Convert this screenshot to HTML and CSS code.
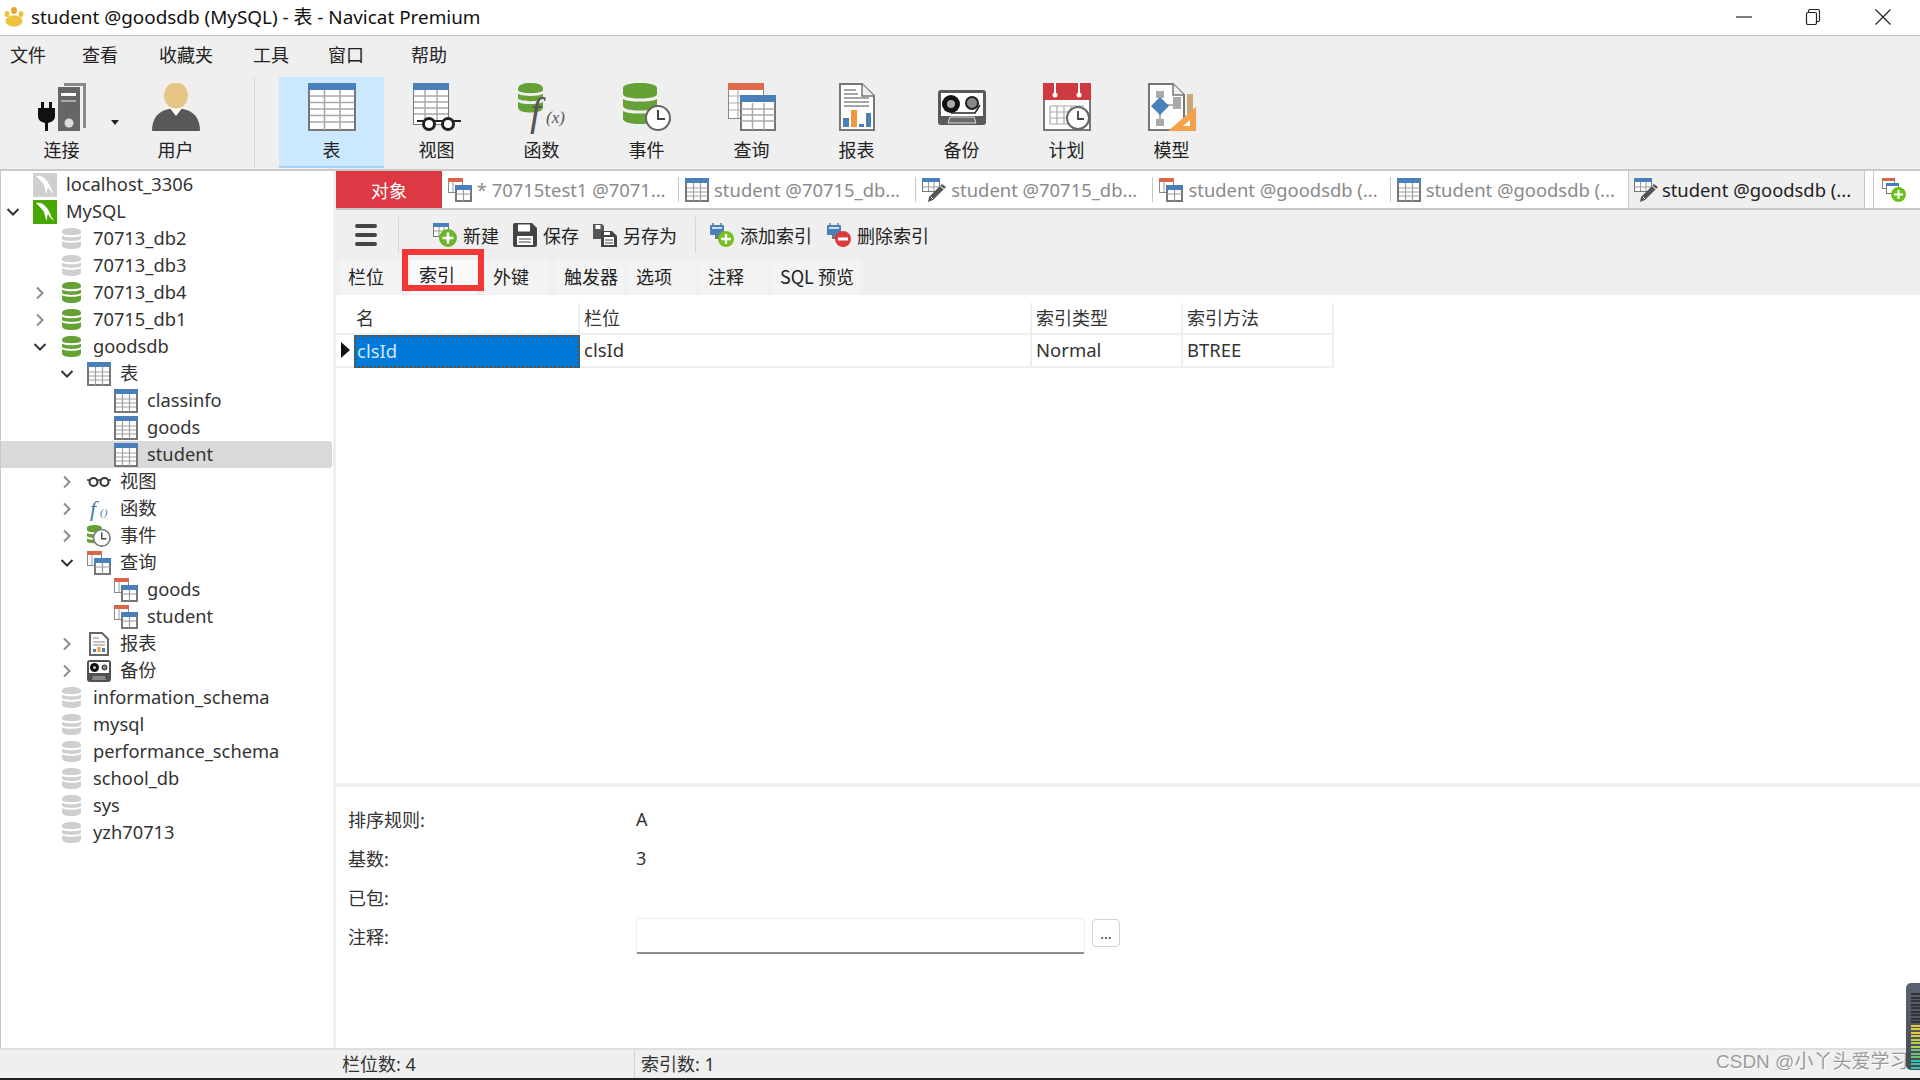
FILE: index.html
```html
<!DOCTYPE html>
<html lang="zh">
<head>
<meta charset="utf-8">
<title>student @goodsdb (MySQL) - 表 - Navicat Premium</title>
<link rel="stylesheet" href="styles.css">
</head>
<body>
<svg class="defs" width="0" height="0" aria-hidden="true">
  <symbol id="i-table" viewBox="0 0 48 48">
    <rect x="1" y="1" width="46" height="46" fill="#fff" stroke="#777" stroke-width="2"/>
    <path d="M2 13h44M2 19.500h44M2 26h44M2 32.500h44M2 39h44M16.500 7v40M32 7v40" stroke="#a8a8a8" stroke-width="1.600" fill="none"/>
    <rect width="48" height="7" fill="#4a80b9"/>
  </symbol>
  <symbol id="i-stable" viewBox="0 0 24 24">
    <rect x="1" y="1" width="22" height="22" fill="#fff" stroke="#777" stroke-width="2"/>
    <path d="M2 10h20M2 14h20M2 18h20M8.500 5v18M15.500 5v18" stroke="#a0a0a0" stroke-width="1.200" fill="none"/>
    <rect width="24" height="5" fill="#4a80b9"/>
  </symbol>
  <symbol id="i-view" viewBox="0 0 48 48">
    <rect x=".5" y=".5" width="35" height="41" fill="#fff" stroke="#777"/>
    <path d="M1 13h34M1 19h34M1 25h34M1 31h34M12 7v30M24 7v30" stroke="#a8a8a8" stroke-width="1.400"/>
    <rect width="36" height="7" fill="#4a80b9"/>
    <path d="M4 38h44" stroke="#222" stroke-width="2"/>
    <circle cx="16" cy="41" r="5.500" fill="#fff" stroke="#222" stroke-width="3"/>
    <circle cx="35" cy="41" r="5.500" fill="#fff" stroke="#222" stroke-width="3"/>
  </symbol>
  <symbol id="i-db" viewBox="0 0 20 22">
    <path d="M0 4c0-2.500 4-4 10-4s10 1.500 10 4v1c0 1.500-4 2.500-10 2.500S0 6.500 0 5z" fill="currentColor"/>
    <path d="M0 8c3 1.500 6 1.600 10 1.600S17 9.500 20 8v3c0 1.500-4 2.500-10 2.500S0 12.500 0 11z" fill="currentColor"/>
    <path d="M0 14c3 1.500 6 1.600 10 1.600s7-.1 10-1.600v4c0 2.500-4 4-10 4S0 20.500 0 18z" fill="currentColor"/>
  </symbol>
  <symbol id="i-event" viewBox="0 0 48 48">
    <path d="M0 5c0-3.300 8-5 17-5s17 1.700 17 5v6c0 3-8 4.500-17 4.500S0 14 0 11zM0 16c4 2 9 2.500 17 2.500s13-.5 17-2.500v7c0 3-8 4.500-17 4.500S0 26 0 23zM0 28c4 2 9 2.500 17 2.500s13-.5 17-2.500v8c0 3-8 5-17 5S0 39 0 36z" fill="#66a136"/>
    <circle cx="35" cy="35" r="12" fill="#fff" stroke="#666" stroke-width="2"/>
    <path d="M35 27v9h7" fill="none" stroke="#444" stroke-width="2"/>
  </symbol>
  <symbol id="i-query" viewBox="0 0 48 48">
    <rect x=".5" y=".5" width="35" height="35" fill="#fff" stroke="#888"/>
    <path d="M1 13h34M1 20h34M1 27h34M10 6v29" stroke="#b0b0b0" stroke-width="1.200"/>
    <rect width="36" height="7" fill="#dd6a4a"/>
    <rect x="13" y="13" width="34" height="34" fill="#fff" stroke="#777" stroke-width="2"/>
    <path d="M13 26h34M13 32h34M13 38h34M24.500 20v27M36 20v27" stroke="#a8a8a8" stroke-width="1.400"/>
    <rect x="12" y="12" width="36" height="7" fill="#4a80b9"/>
  </symbol>
  <symbol id="i-squery" viewBox="0 0 24 24">
    <rect x=".5" y=".5" width="14" height="14" fill="#fff" stroke="#888"/>
    <rect width="15" height="4" fill="#d9654a"/>
    <path d="M5 4v10" stroke="#999"/>
    <rect x="8" y="8" width="15" height="15" fill="#fff" stroke="#777" stroke-width="2"/>
    <path d="M8 16h15M15.500 12v11" stroke="#999" stroke-width="1.200"/>
    <rect x="7" y="7" width="17" height="5" fill="#4a80b9"/>
  </symbol>
  <symbol id="i-report" viewBox="0 0 48 48">
    <path d="M7 1h22l12 12v34H7z" fill="#fff" stroke="#777" stroke-width="2"/>
    <path d="M29 1v12h12" fill="#eee" stroke="#777" stroke-width="1.500"/>
    <path d="M11 7h12M11 11h14M11 15h25M11 19h25M11 23h25" stroke="#888" stroke-width="1.300"/>
    <rect x="10" y="35" width="6" height="9" fill="#4a80b9"/>
    <rect x="18" y="27" width="6" height="17" fill="#f0983a"/>
    <rect x="26" y="41" width="5" height="3" fill="#4a80b9"/>
    <rect x="33" y="30" width="5" height="14" fill="#4a80b9"/>
  </symbol>
  <symbol id="i-backup" viewBox="0 0 48 48">
    <rect y="7" width="48" height="35" rx="3" fill="#5a5a5a"/>
    <rect x="3" y="10" width="42" height="23" fill="#fff"/>
    <circle cx="13" cy="21" r="9" fill="#111"/>
    <circle cx="13" cy="21" r="4" fill="#aaa"/>
    <circle cx="34" cy="20" r="6" fill="#888" stroke="#222" stroke-width="2"/>
    <path d="M13 30h24l5-8" fill="none" stroke="#222" stroke-width="1.500"/>
    <path d="M10 40l2-6h24l2 6z" fill="#6a6a6a" stroke="#ddd"/>
  </symbol>
  <symbol id="i-sched" viewBox="0 0 48 48">
    <rect x="1" y="1" width="46" height="46" fill="#fff" stroke="#777" stroke-width="2"/>
    <rect width="48" height="17" fill="#cf3a40"/>
    <path d="M12 0v11M36 0v11" stroke="#fff" stroke-width="2"/>
    <circle cx="12" cy="12" r="2.500" fill="#fff"/><circle cx="36" cy="12" r="2.500" fill="#fff"/>
    <path d="M7 23h34M7 29h34M7 35h34M7 41h34M7 23v18M14 23v18M21 23v18M28 23v18M35 23v18" stroke="#aaa" stroke-width="1.200" fill="none"/>
    <circle cx="35" cy="35" r="11" fill="#fff" stroke="#666" stroke-width="2"/>
    <path d="M35 28v8h6" fill="none" stroke="#444" stroke-width="1.800"/>
  </symbol>
  <symbol id="i-model" viewBox="0 0 48 48">
    <path d="M1 1h24l11 11v35H1z" fill="#fff" stroke="#777" stroke-width="2"/>
    <path d="M25 1v11h11" fill="#eee" stroke="#777" stroke-width="1.500"/>
    <path d="M12 13v24M12 22h20v-8" fill="none" stroke="#999" stroke-width="1.500"/>
    <rect x="8" y="8" width="8" height="7" fill="#aaa"/>
    <rect x="8" y="36" width="8" height="7" fill="#aaa"/>
    <rect x="25" y="14" width="8" height="12" fill="#aaa"/>
    <path d="M12 14l9 9-9 9-9-9z" fill="#4a80b9"/>
    <rect x="39" y="11" width="6" height="20" fill="#c9a878"/>
    <path d="M48 24v24H20z" fill="#f5a04a"/>
    <path d="M42 37v6h-7z" fill="#fff"/>
  </symbol>
  <symbol id="i-conn" viewBox="0 0 48 48">
    <path d="M26 0h22v45h-3V3H26z" fill="#8a8a8a"/>
    <rect x="20" y="4" width="22" height="44" fill="#666"/>
    <rect x="23" y="10" width="15" height="3" fill="#fff"/>
    <rect x="23" y="17" width="15" height="2" fill="#aaa"/>
    <circle cx="31" cy="40" r="4.500" fill="#ddd"/>
    <path d="M0 25h3v-6h3v6h5v-6h3v6h3v8c0 4-3 6-7 7v8H7v-8c-4-1-7-3-7-7z" fill="#111"/>
  </symbol>
  <symbol id="i-user" viewBox="0 0 48 48">
    <path d="M0 48c0-14 7-20 17-22h14c10 2 17 8 17 22z" fill="#585858"/>
    <path d="M17 24l7 9 7-9z" fill="#fff"/>
    <ellipse cx="24" cy="12.500" rx="12" ry="13" fill="#e6c483"/>
  </symbol>
  <symbol id="i-mysql" viewBox="0 0 24 24">
    <rect width="24" height="24" fill="currentColor"/>
    <path d="M3 3c4-1 8 1 10 4 3 3 4 6 5 9l3 5c-3-2-5-5-6-7-1 2-1 4-1 7-2-3-2-6-3-9C9 9 6 6 3 3z" fill="#fff"/>
  </symbol>
  <symbol id="i-glasses" viewBox="0 0 24 12">
    <path d="M0 4h24" stroke="#333" stroke-width="1.500"/>
    <circle cx="6.500" cy="6" r="4" fill="#fff" stroke="#333" stroke-width="2"/>
    <circle cx="17.500" cy="6" r="4" fill="#fff" stroke="#333" stroke-width="2"/>
  </symbol>
  <symbol id="i-sevent" viewBox="0 0 26 24">
    <path d="M0 3c0-2 4-3 8-3s8 1 8 3v3c0 1-4 2-8 2S0 7 0 6zM0 9c3 1 5 1 8 1s5 0 8-1v3c0 1-4 2-8 2s-8-1-8-2zM0 15c3 1 5 1 8 1v4c-4 0-8-1-8-2z" fill="#66a136"/>
    <circle cx="16" cy="14" r="9" fill="#fff" stroke="#777" stroke-width="1.800"/>
    <path d="M16 8v7h5" fill="none" stroke="#444" stroke-width="1.500"/>
  </symbol>
  <symbol id="i-sreport" viewBox="0 0 24 24">
    <path d="M3 1h12l6 6v16H3z" fill="#fff" stroke="#666" stroke-width="2"/>
    <path d="M6 6h6M6 10h12M6 13h12" stroke="#888"/>
    <rect x="6" y="17" width="3" height="3" fill="#4a80b9"/>
    <rect x="10.500" y="15" width="3" height="5" fill="#f0983a"/>
    <rect x="15" y="16" width="3" height="4" fill="#4a80b9"/>
  </symbol>
  <symbol id="i-sbackup" viewBox="0 0 24 24">
    <rect width="24" height="22" y="1" rx="3" fill="#505050"/>
    <rect x="2" y="3" width="20" height="11" fill="#fff"/>
    <circle cx="7.500" cy="8.500" r="4.500" fill="#111"/>
    <circle cx="7.500" cy="8.500" r="1.500" fill="#ccc"/>
    <circle cx="17.500" cy="8.500" r="2.500" fill="#888" stroke="#222"/>
    <path d="M5 21l1-4h12l1 4z" fill="#888"/>
  </symbol>
  <symbol id="i-design" viewBox="0 0 24 24">
    <rect x=".5" y=".5" width="17" height="13" fill="#fff" stroke="#777"/>
    <path d="M1 9h16M6.500 4v9M12 4v9" stroke="#999"/>
    <rect width="18" height="4" fill="#4a80b9"/>
    <path d="M20 6l4 3-13 13-5 2 1-5z" fill="#555"/>
    <path d="M18 8l4 3M9 19l2 2" stroke="#fff" fill="none"/>
  </symbol>
  <symbol id="i-newtab" viewBox="0 0 24 24">
    <rect x=".5" y=".5" width="12" height="10" fill="#fff" stroke="#888"/>
    <rect width="13" height="3" fill="#d9654a"/>
    <rect x="4.500" y="5.500" width="12" height="10" fill="#fff" stroke="#777"/>
    <rect x="4" y="5" width="13" height="3" fill="#4a80b9"/>
    <circle cx="16.500" cy="16.500" r="7.500" fill="#6cc11d"/>
    <path d="M16.500 12v9M12 16.500h9" stroke="#fff" stroke-width="2"/>
  </symbol>
  <symbol id="i-new" viewBox="0 0 24 24">
    <rect x=".5" y=".5" width="15" height="13" fill="#fff" stroke="#777"/>
    <path d="M1 8h14M6 4v9M11 4v9" stroke="#999"/>
    <rect width="16" height="4" fill="#4a80b9"/>
    <circle cx="15" cy="15" r="9" fill="#6cb52a"/>
    <path d="M15 9.500v11M9.500 15h11" stroke="#fff" stroke-width="2.600"/>
  </symbol>
  <symbol id="i-save" viewBox="0 0 24 24">
    <path d="M0 2a2 2 0 0 1 2-2h17l5 5v17a2 2 0 0 1-2 2H2a2 2 0 0 1-2-2z" fill="#444"/>
    <rect x="5" y="1.500" width="12" height="7" fill="#fff"/>
    <rect x="4" y="13" width="16" height="9" fill="#fff"/>
    <path d="M6 16h12M6 19h12" stroke="#444" stroke-width="1.200"/>
  </symbol>
  <symbol id="i-saveas" viewBox="0 0 24 24">
    <path d="M0 1h9l2 2v13H0z" fill="#555"/>
    <rect x="2.500" y="2" width="5" height="4" fill="#fff"/>
    <path d="M8 8h11l5 5v11H8z" fill="#444"/>
    <rect x="11" y="14" width="10" height="8" fill="#fff"/>
    <path d="M12 17h8M12 20h8" stroke="#444"/>
    <rect x="11" y="9" width="6" height="3" fill="#fff"/>
  </symbol>
  <symbol id="i-idx" viewBox="0 0 24 24">
    <path d="M3 3V0M11 3V0" stroke="#4a80b9" stroke-width="1.500"/>
    <rect y="2" width="14" height="10" rx="1" fill="#4a80b9"/>
    <rect x="2" y="4" width="10" height="2" fill="#cfe0f0"/>
    <path d="M5 12v4h4v-4z" fill="#777"/>
  </symbol>
  <symbol id="i-addi" viewBox="0 0 24 24">
    <use href="#i-idx" width="24" height="24"/>
    <circle cx="16" cy="16" r="8" fill="#76c11f"/>
    <path d="M16 11v10M11 16h10" stroke="#fff" stroke-width="2.400"/>
  </symbol>
  <symbol id="i-deli" viewBox="0 0 24 24">
    <use href="#i-idx" width="24" height="24"/>
    <circle cx="16" cy="16" r="8" fill="#dd3a3a"/>
    <path d="M11 16h10" stroke="#fff" stroke-width="3"/>
  </symbol>
  <symbol id="i-chev-d" viewBox="0 0 14 10"><path d="M1.500 2l5.500 5.500L12.500 2" fill="none" stroke="currentColor" stroke-width="2"/></symbol>
  <symbol id="i-chev-r" viewBox="0 0 10 14"><path d="M2 1.500L7.500 7 2 12.500" fill="none" stroke="currentColor" stroke-width="2"/></symbol>
</svg>

<div class="app">
  <header class="titlebar">
    <svg class="app-logo" viewBox="0 0 20 20"><ellipse cx="10" cy="14" rx="8.500" ry="5.800" fill="#ecc23e"/><ellipse cx="3" cy="7" rx="2.500" ry="3" fill="#ecc23e"/><ellipse cx="10" cy="3.500" rx="3" ry="3.500" fill="#e8a23a"/><ellipse cx="17" cy="7" rx="2.500" ry="3" fill="#ecc23e"/></svg>
    <span class="title-text">student @goodsdb (MySQL) - 表 - Navicat Premium</span>
    <div class="win-btns">
      <svg viewBox="0 0 16 16"><path d="M0 8h16" stroke="#222" stroke-width="1.200"/></svg>
      <svg viewBox="0 0 16 16"><path d="M3.500 3.500V2a1.500 1.500 0 0 1 1.500-1.500h8A1.500 1.500 0 0 1 14.500 2v9a1.500 1.500 0 0 1-1.500 1.500h-1.500" fill="none" stroke="#222" stroke-width="1.100"/><rect x="1.500" y="3.500" width="10" height="12" rx="1.500" fill="#fff" stroke="#222" stroke-width="1.200"/></svg>
      <svg viewBox="0 0 16 16"><path d="M.5.500l15 15M15.500.500l-15 15" stroke="#222" stroke-width="1.200"/></svg>
    </div>
  </header>

  <nav class="menubar">
    <span class="m-wen">文件</span><span class="m-cha">查看</span><span class="m-shou">收藏夹</span><span class="m-gong">工具</span><span class="m-chuang">窗口</span><span class="m-bang">帮助</span>
  </nav>

  <div class="toolbar">
    <div class="tb-btn tb-conn"><svg class="tb-ico"><use href="#i-conn"/></svg><span>连接</span><i class="caret"></i></div>
    <div class="tb-btn tb-user"><svg class="tb-ico"><use href="#i-user"/></svg><span>用户</span></div>
    <div class="tb-sep"></div>
    <div class="tb-btn active"><svg class="tb-ico"><use href="#i-table"/></svg><span>表</span></div>
    <div class="tb-btn"><svg class="tb-ico"><use href="#i-view"/></svg><span>视图</span></div>
    <div class="tb-btn"><svg class="tb-ico" viewBox="0 0 48 48"><g class="c-green" transform="scale(1.250 1.350)"><use href="#i-db" width="20" height="22"/></g><text x="12" y="42" class="fx-big">f</text><text x="28" y="40" class="fx-small">(x)</text></svg><span>函数</span></div>
    <div class="tb-btn"><svg class="tb-ico"><use href="#i-event"/></svg><span>事件</span></div>
    <div class="tb-btn"><svg class="tb-ico"><use href="#i-query"/></svg><span>查询</span></div>
    <div class="tb-btn"><svg class="tb-ico"><use href="#i-report"/></svg><span>报表</span></div>
    <div class="tb-btn"><svg class="tb-ico"><use href="#i-backup"/></svg><span>备份</span></div>
    <div class="tb-btn"><svg class="tb-ico"><use href="#i-sched"/></svg><span>计划</span></div>
    <div class="tb-btn"><svg class="tb-ico"><use href="#i-model"/></svg><span>模型</span></div>
  </div>

  <div class="workspace">
    <aside class="tree">
      <div class="row l0"><span class="chev"></span><span class="ico"><svg class="s24 c-gray"><use href="#i-mysql"/></svg></span><span class="lbl">localhost_3306</span></div>
      <div class="row l0"><span class="chev open"><svg class="cd"><use href="#i-chev-d"/></svg></span><span class="ico"><svg class="s24 c-mysql"><use href="#i-mysql"/></svg></span><span class="lbl">MySQL</span></div>
      <div class="row l1"><span class="chev"></span><span class="ico"><svg class="sdb c-gray"><use href="#i-db"/></svg></span><span class="lbl">70713_db2</span></div>
      <div class="row l1"><span class="chev"></span><span class="ico"><svg class="sdb c-gray"><use href="#i-db"/></svg></span><span class="lbl">70713_db3</span></div>
      <div class="row l1"><span class="chev"><svg class="cr"><use href="#i-chev-r"/></svg></span><span class="ico"><svg class="sdb c-green"><use href="#i-db"/></svg></span><span class="lbl">70713_db4</span></div>
      <div class="row l1"><span class="chev"><svg class="cr"><use href="#i-chev-r"/></svg></span><span class="ico"><svg class="sdb c-green"><use href="#i-db"/></svg></span><span class="lbl">70715_db1</span></div>
      <div class="row l1"><span class="chev open"><svg class="cd"><use href="#i-chev-d"/></svg></span><span class="ico"><svg class="sdb c-green"><use href="#i-db"/></svg></span><span class="lbl">goodsdb</span></div>
      <div class="row l2"><span class="chev open"><svg class="cd"><use href="#i-chev-d"/></svg></span><span class="ico"><svg class="s24"><use href="#i-stable"/></svg></span><span class="lbl">表</span></div>
      <div class="row l3"><span class="chev"></span><span class="ico"><svg class="s24"><use href="#i-stable"/></svg></span><span class="lbl">classinfo</span></div>
      <div class="row l3"><span class="chev"></span><span class="ico"><svg class="s24"><use href="#i-stable"/></svg></span><span class="lbl">goods</span></div>
      <div class="row l3 selected"><span class="chev"></span><span class="ico"><svg class="s24"><use href="#i-stable"/></svg></span><span class="lbl">student</span></div>
      <div class="row l2"><span class="chev"><svg class="cr"><use href="#i-chev-r"/></svg></span><span class="ico"><svg class="sgl"><use href="#i-glasses"/></svg></span><span class="lbl">视图</span></div>
      <div class="row l2"><span class="chev"><svg class="cr"><use href="#i-chev-r"/></svg></span><span class="ico"><svg class="s24" viewBox="0 0 24 24"><text x="3" y="19" class="sfx-big">f</text><text x="13" y="19" class="sfx-small">()</text></svg></span><span class="lbl">函数</span></div>
      <div class="row l2"><span class="chev"><svg class="cr"><use href="#i-chev-r"/></svg></span><span class="ico"><svg class="s24"><use href="#i-sevent"/></svg></span><span class="lbl">事件</span></div>
      <div class="row l2"><span class="chev open"><svg class="cd"><use href="#i-chev-d"/></svg></span><span class="ico"><svg class="s24"><use href="#i-squery"/></svg></span><span class="lbl">查询</span></div>
      <div class="row l3"><span class="chev"></span><span class="ico"><svg class="s24"><use href="#i-squery"/></svg></span><span class="lbl">goods</span></div>
      <div class="row l3"><span class="chev"></span><span class="ico"><svg class="s24"><use href="#i-squery"/></svg></span><span class="lbl">student</span></div>
      <div class="row l2"><span class="chev"><svg class="cr"><use href="#i-chev-r"/></svg></span><span class="ico"><svg class="s24"><use href="#i-sreport"/></svg></span><span class="lbl">报表</span></div>
      <div class="row l2"><span class="chev"><svg class="cr"><use href="#i-chev-r"/></svg></span><span class="ico"><svg class="s24"><use href="#i-sbackup"/></svg></span><span class="lbl">备份</span></div>
      <div class="row l1"><span class="chev"></span><span class="ico"><svg class="sdb c-gray"><use href="#i-db"/></svg></span><span class="lbl">information_schema</span></div>
      <div class="row l1"><span class="chev"></span><span class="ico"><svg class="sdb c-gray"><use href="#i-db"/></svg></span><span class="lbl">mysql</span></div>
      <div class="row l1"><span class="chev"></span><span class="ico"><svg class="sdb c-gray"><use href="#i-db"/></svg></span><span class="lbl">performance_schema</span></div>
      <div class="row l1"><span class="chev"></span><span class="ico"><svg class="sdb c-gray"><use href="#i-db"/></svg></span><span class="lbl">school_db</span></div>
      <div class="row l1"><span class="chev"></span><span class="ico"><svg class="sdb c-gray"><use href="#i-db"/></svg></span><span class="lbl">sys</span></div>
      <div class="row l1"><span class="chev"></span><span class="ico"><svg class="sdb c-gray"><use href="#i-db"/></svg></span><span class="lbl">yzh70713</span></div>
    </aside>

    <main class="main">
      <div class="doc-tabs">
        <div class="obj-tab">对象</div>
        <div class="doc-tab"><svg class="t-ico"><use href="#i-squery"/></svg><span>* 70715test1 @7071...</span></div>
        <div class="doc-tab"><svg class="t-ico"><use href="#i-stable"/></svg><span>student @70715_db...</span></div>
        <div class="doc-tab"><svg class="t-ico"><use href="#i-design"/></svg><span>student @70715_db...</span></div>
        <div class="doc-tab"><svg class="t-ico"><use href="#i-squery"/></svg><span>student @goodsdb (...</span></div>
        <div class="doc-tab"><svg class="t-ico"><use href="#i-stable"/></svg><span>student @goodsdb (...</span></div>
        <div class="doc-tab current"><svg class="t-ico"><use href="#i-design"/></svg><span>student @goodsdb (...</span></div>
        <div class="new-tab"><svg class="t-ico"><use href="#i-newtab"/></svg></div>
      </div>

      <div class="actions">
        <div class="hamb"><i></i><i></i><i></i></div>
        <div class="a-sep"></div>
        <div class="act a-new"><svg><use href="#i-new"/></svg><span>新建</span></div>
        <div class="act a-save"><svg><use href="#i-save"/></svg><span>保存</span></div>
        <div class="act a-saveas"><svg><use href="#i-saveas"/></svg><span>另存为</span></div>
        <div class="a-sep a-sep2"></div>
        <div class="act a-add"><svg><use href="#i-addi"/></svg><span>添加索引</span></div>
        <div class="act a-del"><svg><use href="#i-deli"/></svg><span>删除索引</span></div>
      </div>

      <div class="subtabs">
        <div class="st st1">栏位</div>
        <div class="st st2 current">索引</div>
        <div class="st st3">外键</div>
        <div class="st st4">触发器</div>
        <div class="st st5">选项</div>
        <div class="st st6">注释</div>
        <div class="st st7">SQL 预览</div>
        <div class="redbox"></div>
      </div>

      <section class="grid-area">
        <div class="grid">
          <div class="gh gi"></div><div class="gh gh-name">名</div><div class="gh">栏位</div><div class="gh">索引类型</div><div class="gh">索引方法</div>
          <div class="gc gi"><i class="row-mark"></i></div><div class="gc sel">clsId</div><div class="gc">clsId</div><div class="gc">Normal</div><div class="gc">BTREE</div>
        </div>
      </section>

      <section class="detail">
        <div class="d-lbl">排序规则:</div><div class="d-val">A</div>
        <div class="d-lbl">基数:</div><div class="d-val">3</div>
        <div class="d-lbl">已包:</div><div class="d-val"></div>
        <div class="d-lbl">注释:</div><div class="d-val d-inp"><div class="input"></div><div class="more">...</div></div>
      </section>
    </main>
  </div>

  <footer class="status">
    <div class="s-left"></div>
    <div class="s-a">栏位数: 4</div>
    <div class="s-b">索引数: 1</div>
  </footer>

  <div class="watermark">CSDN @小丫头爱学习</div>
  <div class="meter">
    <i class="off"></i><i class="off"></i><i class="off"></i><i class="off"></i><i class="off"></i><i class="off"></i><i class="off"></i><i class="off"></i><i class="off"></i>
    <i class="y"></i><i class="y"></i><i class="y"></i><i class="y"></i><i class="yg"></i><i class="yg"></i><i class="yg"></i><i class="g"></i><i class="g"></i><i class="g"></i><i class="t"></i><i class="t"></i><i class="t"></i>
  </div>
</div>
</body>
</html>
```

FILE: styles.css
```css
* { box-sizing: border-box; }
html, body { margin: 0; padding: 0; height: 100%; overflow: hidden; background: #fff; }
body { font-family: "Noto Sans", "Noto Sans CJK SC", sans-serif; font-size: 16px; color: #333; }
.defs { position: absolute; }
.app { position: relative; width: 1920px; height: 1080px; display: flex; flex-direction: column; overflow: hidden; }

.titlebar { height: 36px; flex: none; display: flex; align-items: center; background: #fff; border-bottom: 1px solid #bdbdbd; padding: 0 0 1px 4px; }
.app-logo { width: 20px; height: 20px; margin-right: 7px; }
.title-text { font-size: 18.900px; line-height: 24px; color: #111; white-space: nowrap; }
.win-btns { margin-left: auto; display: flex; padding-right: 29px; }
.win-btns svg { width: 16px; height: 16px; margin-left: 53px; }
.win-btns svg:nth-child(3) { margin-left: 54px; }

.menubar { height: 41px; flex: none; background: #efefef; display: flex; align-items: center; font-size: 18px; font-family: "Noto Sans CJK SC", sans-serif; color: #222; padding-bottom: 6px; }
.m-wen { margin-left: 10px; }
.m-cha { margin-left: 36px; }
.m-shou { margin-left: 41px; }
.m-gong { margin-left: 40px; }
.m-chuang { margin-left: 39px; }
.m-bang { margin-left: 47px; }

.toolbar { height: 94px; flex: none; background: #efefef; display: flex; align-items: flex-start; padding-left: 9px; border-bottom: 2px solid #c8c8c8; }
.tb-btn { position: relative; width: 105px; height: 91px; display: flex; flex-direction: column; align-items: center; padding-top: 6px; font-family: "Noto Sans CJK SC", sans-serif; font-size: 18px; color: #222; }
.tb-btn span { margin-top: 6px; line-height: 24px; }
.tb-ico { width: 48px; height: 48px; display: block; overflow: visible; }
.tb-user { margin-left: 9px; }
.tb-btn.active { background: #cce8ff; border-bottom: 2px solid #a6d3f5; }
.tb-sep { width: 1px; height: 90px; background: #d6d6d6; margin: 1px 24px 0 26px; }
.caret { position: absolute; left: 102px; top: 43px; width: 0; height: 0; border-left: 4px solid transparent; border-right: 4px solid transparent; border-top: 5px solid #222; }

.workspace { flex: 1; min-height: 0; display: flex; }
.tree { width: 336px; flex: none; background: #fff; border-left: 1px solid #c8c8c8; border-right: 3px solid #efefef; font-size: 18.300px; overflow: hidden; }
.row { height: 27px; display: flex; align-items: center; white-space: nowrap; color: #333; margin: 0 1px 0 -1px; }
.l1 { padding-left: 27px; }
.l2 { padding-left: 54px; }
.l3 { padding-left: 81px; }
.chev { width: 27px; flex: none; display: flex; justify-content: center; align-items: center; color: #8c8c8c; padding-right: 2px; }
.chev.open { color: #333; }
.cd { width: 14px; height: 10px; }
.cr { width: 10px; height: 14px; }
.ico { width: 35px; flex: none; display: flex; justify-content: center; align-items: center; }
.s24 { width: 24px; height: 24px; display: block; overflow: visible; }
.sdb { width: 19px; height: 21px; display: block; }
.sgl { width: 24px; height: 12px; display: block; }
.c-gray { color: #cfcfcf; }
.c-green { color: #66a136; }
.c-mysql { color: #46a800; }
.lbl { margin: -1px 0 0 4px; line-height: 26px; font-family: "Noto Sans", "Noto Sans CJK SC", sans-serif; }
.row.selected { background: #d9d9d9; border-radius: 3px; }

.fx-big { font: italic 40px "Liberation Serif", serif; fill: #555; }
.fx-small { font: italic 17px "Liberation Serif", serif; fill: #555; }
.sfx-big { font: italic 22px "Liberation Serif", serif; fill: #3f77ad; }
.sfx-small { font: italic 11px "Liberation Serif", serif; fill: #3f77ad; }

.main { flex: 1; min-width: 0; display: flex; flex-direction: column; background: #fff; }

.doc-tabs { height: 39px; flex: none; display: flex; align-items: stretch; background: #fff; border-bottom: 2px solid #c8c8c8; font-size: 18.400px; color: #8a8a8a; }
.obj-tab { width: 106px; background: #dd3945; color: #fff; display: flex; align-items: center; justify-content: center; font-family: "Noto Sans CJK SC", sans-serif; font-size: 18px; }
.doc-tab { width: 237.500px; display: flex; align-items: center; padding-left: 6px; position: relative; white-space: nowrap; }
.doc-tab + .doc-tab::before { content: ""; position: absolute; left: -1px; top: 6px; bottom: 6px; width: 1px; background: #c8c8c8; }
.t-ico { width: 24px; height: 24px; flex: none; margin-right: 5px; }
.doc-tab.current { background: #efefef; color: #222; border-left: 1px solid #c8c8c8; border-right: 1px solid #c8c8c8; padding-left: 5px; }
.doc-tab.current .t-ico { margin-right: 4px; }
.doc-tab.current::before { display: none; }
.new-tab { margin-left: 8px; width: 47px; display: flex; align-items: center; justify-content: center; border-left: 1px solid #c8c8c8; padding-right: 6px; }
.new-tab .t-ico { margin: 0; }

.actions { height: 50px; flex: none; background: #efefef; display: flex; align-items: center; font-family: "Noto Sans CJK SC", sans-serif; font-size: 18px; color: #222; }
.hamb { width: 22px; margin-left: 19px; display: flex; flex-direction: column; gap: 5px; }
.hamb i { display: block; height: 4px; border-radius: 2px; background: #444; }
.a-sep { width: 1px; height: 36px; background: #d6d6d6; margin-left: 21px; }
.a-sep2 { margin-left: 18px; }
.act { display: flex; align-items: center; }
.act svg { width: 24px; height: 24px; margin-right: 6px; }
.a-new { margin-left: 34px; }
.a-save { margin-left: 14px; }
.a-saveas { margin-left: 14px; }
.a-add { margin-left: 14px; }
.a-del { margin-left: 15px; }

.subtabs { height: 35px; flex: none; position: relative; background: #efefef; display: flex; align-items: stretch; font-family: "Noto Sans CJK SC", sans-serif; font-size: 18px; color: #222; padding: 0 0 0 3px; }
.st { background: #f3f3f3; display: flex; align-items: center; padding: 0 0 4px 9px; margin-right: 2px; white-space: nowrap; }
.st1 { width: 63px; margin-right: 8px; }
.st2 { width: 67px; margin-right: 7px; padding-bottom: 7px; }
.st3 { width: 65px; margin-right: 6px; }
.st4 { width: 70px; }
.st5 { width: 70px; }
.st6 { width: 70px; }
.st7 { width: 90px; }
.st.current { background: #fafafa; }
.redbox { position: absolute; left: 66px; top: -11px; width: 82px; height: 42px; border: 6px solid #f33636; }

.grid-area { flex: 1; min-height: 0; background: #fff; padding-top: 8px; border-bottom: 4px solid #efefef; }
.grid { display: grid; grid-template-columns: 18px 226px 452px 151px 151px; grid-template-rows: 32px 33px; width: 998px; }
.gh, .gc { display: flex; align-items: center; padding-left: 4px; font-size: 18.500px; color: #333; border-right: 2px solid #efefef; border-bottom: 2px solid #efefef; white-space: nowrap; font-family: "Noto Sans", "Noto Sans CJK SC", sans-serif; }
.gh { padding-bottom: 3px; font-size: 18px; }
.gc { padding-bottom: 2px; }
.gh-name { padding-left: 2px; }
.gi { padding-left: 0; border-right: 0; }
.row-mark { width: 0; height: 0; margin-left: 5px; border-top: 8px solid transparent; border-bottom: 8px solid transparent; border-left: 9px solid #111; }
.gc.sel { background: #0078d7; color: #cfe8ff; outline: 2px dotted #7a4a1a; outline-offset: -2px; border: 0; padding-left: 3px; }

.detail { height: 261px; flex: none; padding: 12px 0 0 12px; display: grid; grid-template-columns: 288px 1fr; grid-auto-rows: 39px; font-size: 18px; color: #333; align-items: center; background: #fff; font-family: "Noto Sans", "Noto Sans CJK SC", sans-serif; }
.d-inp { display: flex; align-items: center; }
.input { width: 449px; height: 36px; background: #fff; border: 1px solid #ededed; border-bottom: 2px solid #8e8e8e; border-radius: 2px; }
.more { width: 28px; height: 28px; margin: -6px 0 0 7px; border: 1px solid #d2d2d2; border-radius: 4px; background: #fff; text-align: center; font-size: 14px; line-height: 28px; }

.status { height: 32px; flex: none; background: #efefef; border-top: 2px solid #dedede; border-bottom: 2px solid #222; display: flex; align-items: center; font-size: 18px; color: #333; font-family: "Noto Sans", "Noto Sans CJK SC", sans-serif; }
.s-left { width: 336px; height: 100%; }
.s-a { width: 299px; height: 100%; padding-left: 6px; border-right: 1px solid #d2d2d2; line-height: 29px; }
.s-b { padding-left: 6px; line-height: 29px; }

.watermark { position: absolute; left: 1716px; top: 1050px; font-family: "Liberation Sans", "Noto Sans CJK SC", sans-serif; font-size: 19px; line-height: 24px; color: #9a9a9a; white-space: nowrap; text-shadow: 1px 1px 0 #fff; }
.meter { position: absolute; left: 1906px; top: 983px; width: 14px; height: 87px; padding: 10px 0 0 5px; background: linear-gradient(#5b6270, #444a56); border-radius: 5px 0 0 5px; display: flex; flex-direction: column; gap: 1.500px; }
.meter i { display: block; width: 9px; height: 2px; background: #333; }
.meter .y { background: #e0c93a; }
.meter .yg { background: #b7cf4d; }
.meter .g { background: #70c370; }
.meter .t { background: #35c0a5; }
```
